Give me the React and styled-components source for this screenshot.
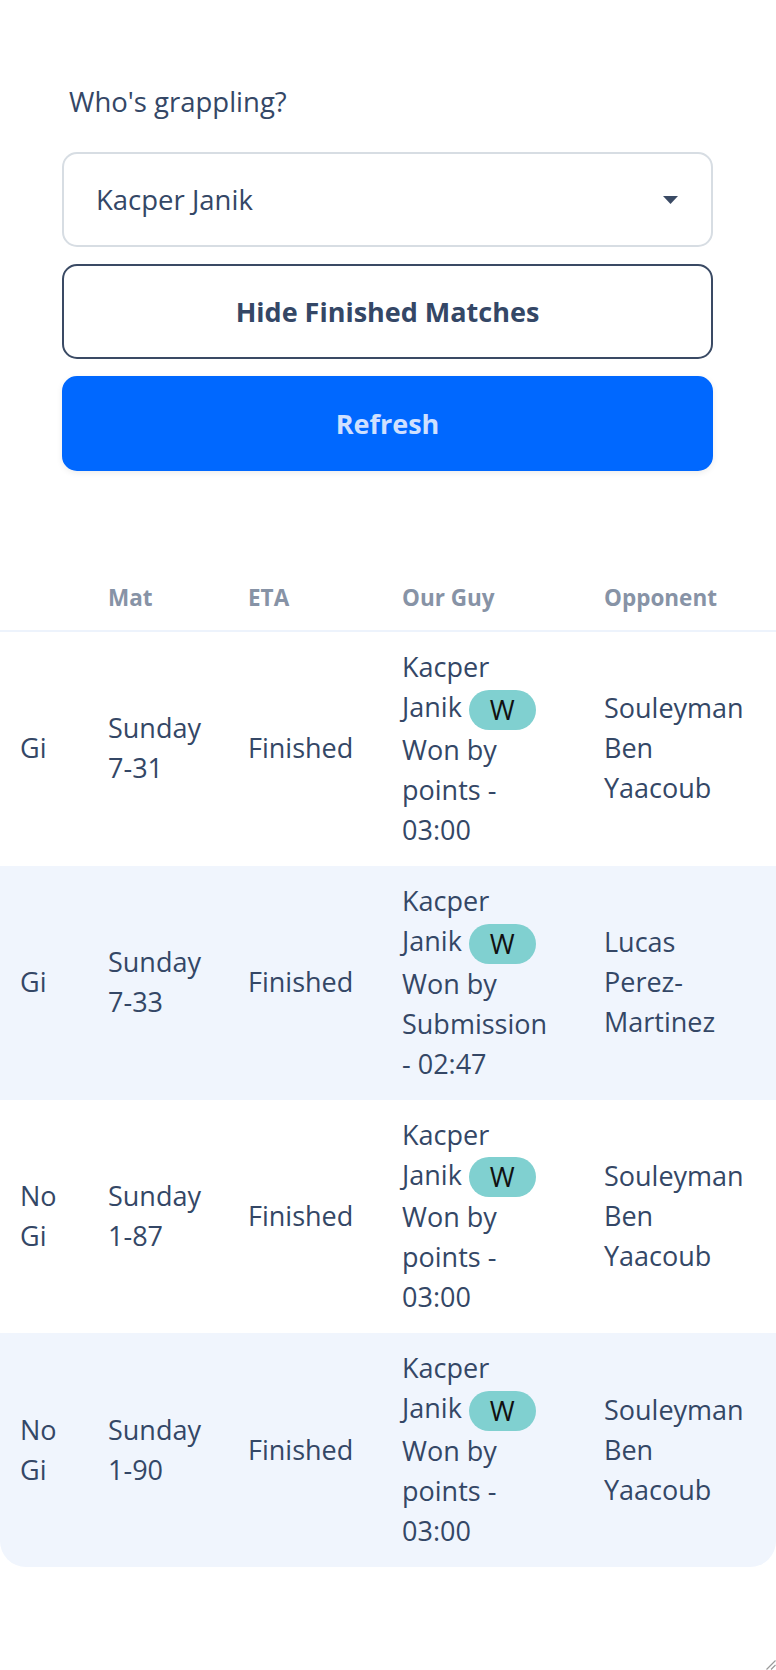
import React from "react";
import styled, { createGlobalStyle } from "styled-components";

const Global = createGlobalStyle`
  html, body { margin: 0; padding: 0; background: #ffffff; }
  body { font-family: "Open Sans", "Noto Sans", sans-serif; color: #344766; }
  * { box-sizing: border-box; }
`;

const Frame = styled.div`
  width: 776px;
  height: 1670px;
  overflow: hidden;
  background: #ffffff;
  display: flex;
  flex-direction: column;
`;

const Controls = styled.section`
  padding: 82px 63px 0 62px;
  display: flex;
  flex-direction: column;
`;

const Label = styled.label`
  font-size: 27.5px;
  line-height: 40px;
  padding-left: 7px;
  margin-bottom: 30px;
  color: #344766;
`;

const Stack = styled.div`
  display: flex;
  flex-direction: column;
  gap: 17px;
`;

const SelectWrap = styled.div`
  position: relative;
`;

const Select = styled.select`
  appearance: none;
  -webkit-appearance: none;
  width: 100%;
  height: 95px;
  padding: 0 60px 0 32px;
  border: 2px solid #d7dde3;
  border-radius: 15px;
  background: #ffffff;
  font-family: inherit;
  font-size: 27.5px;
  color: #344766;
  outline: none;
`;

const Caret = styled.svg`
  position: absolute;
  right: 35px;
  top: 44px;
  width: 15px;
  height: 8px;
  pointer-events: none;
`;

const Button = styled.button`
  height: 95px;
  width: 100%;
  border-radius: 15px;
  font-family: inherit;
  font-size: 27px;
  font-weight: 700;
  cursor: pointer;
  border: 2px solid ${(p) => (p.$primary ? "#0068ff" : "#3a4a64")};
  background: ${(p) => (p.$primary ? "#0068ff" : "#ffffff")};
  color: ${(p) => (p.$primary ? "#cfe0ff" : "#344766")};
  box-shadow: ${(p) => (p.$primary ? "0 2px 6px rgba(0,0,0,0.08)" : "none")};
`;

const TableShell = styled.div`
  margin-top: 95px;
  border-radius: 0 0 26px 26px;
  overflow: hidden;
`;

const Table = styled.table`
  width: 776px;
  table-layout: fixed;
  border-collapse: collapse;
`;

const HeadCell = styled.th`
  text-align: left;
  font-size: 22.5px;
  font-weight: 700;
  color: #8793a6;
  line-height: 40px;
  padding: 12px 20px 12px 20px;
  border-bottom: 2px solid #edf3fc;
`;

const Row = styled.tr`
  background: ${(p) => (p.$alt ? "#f0f5fd" : "#ffffff")};
`;

const Cell = styled.td`
  font-size: 27px;
  line-height: 40px;
  color: #344766;
  padding: 15px ${(p) => (p.$padRight ? p.$padRight : 20)}px 16px 20px;
  vertical-align: middle;
`;

const Badge = styled.span`
  display: inline-block;
  margin-left: 7px;
  height: 40px;
  line-height: 40px;
  padding: 0 21px;
  border-radius: 20px;
  background: #80d0d0;
  color: #111111;
  font-size: 27px;
  vertical-align: middle;
`;

const Result = styled.div`
  display: block;
`;

const Grip = styled.svg`
  margin-top: auto;
  align-self: flex-end;
  width: 12px;
  height: 12px;
  display: block;
`;

const matches = [
  { type: "Gi", mat: "Sunday 7-31", result: "Won by points - 03:00", opponent: "Souleyman Ben Yaacoub" },
  { type: "Gi", mat: "Sunday 7-33", result: "Won by Submission - 02:47", opponent: "Lucas Perez-Martinez" },
  { type: "No Gi", mat: "Sunday 1-87", result: "Won by points - 03:00", opponent: "Souleyman Ben Yaacoub" },
  { type: "No Gi", mat: "Sunday 1-90", result: "Won by points - 03:00", opponent: "Souleyman Ben Yaacoub" },
];

export default function App() {
  return (
    <Frame>
      <Global />
      <Controls>
        <Label htmlFor="grappler">Who's grappling?</Label>
        <Stack>
          <SelectWrap>
            <Select id="grappler" defaultValue="Kacper Janik">
              <option>Kacper Janik</option>
            </Select>
            <Caret viewBox="0 0 15 8">
              <path d="M0 0 H15 L7.5 8 Z" fill="#3a4a64" />
            </Caret>
          </SelectWrap>
          <Button>Hide Finished Matches</Button>
          <Button $primary>Refresh</Button>
        </Stack>
      </Controls>
      <TableShell>
        <Table>
          <colgroup>
            <col style={{ width: 88 }} />
            <col style={{ width: 140 }} />
            <col style={{ width: 154 }} />
            <col style={{ width: 202 }} />
            <col style={{ width: 192 }} />
          </colgroup>
          <thead>
            <tr>
              <HeadCell></HeadCell>
              <HeadCell>Mat</HeadCell>
              <HeadCell>ETA</HeadCell>
              <HeadCell>Our Guy</HeadCell>
              <HeadCell>Opponent</HeadCell>
            </tr>
          </thead>
          <tbody>
            {matches.map((m, i) => (
              <Row key={i} $alt={i % 2 === 1}>
                <Cell>{m.type}</Cell>
                <Cell>{m.mat}</Cell>
                <Cell>Finished</Cell>
                <Cell $padRight={36}>
                  Kacper Janik<Badge>W</Badge>
                  <Result>{m.result}</Result>
                </Cell>
                <Cell>{m.opponent}</Cell>
              </Row>
            ))}
          </tbody>
        </Table>
      </TableShell>
      <Grip viewBox="0 0 12 12">
        <path d="M11.5 2.5 L2.5 11.5 M11.5 7 L7 11.5" stroke="#9a9a9a" strokeWidth="1.2" fill="none" />
      </Grip>
    </Frame>
  );
}
